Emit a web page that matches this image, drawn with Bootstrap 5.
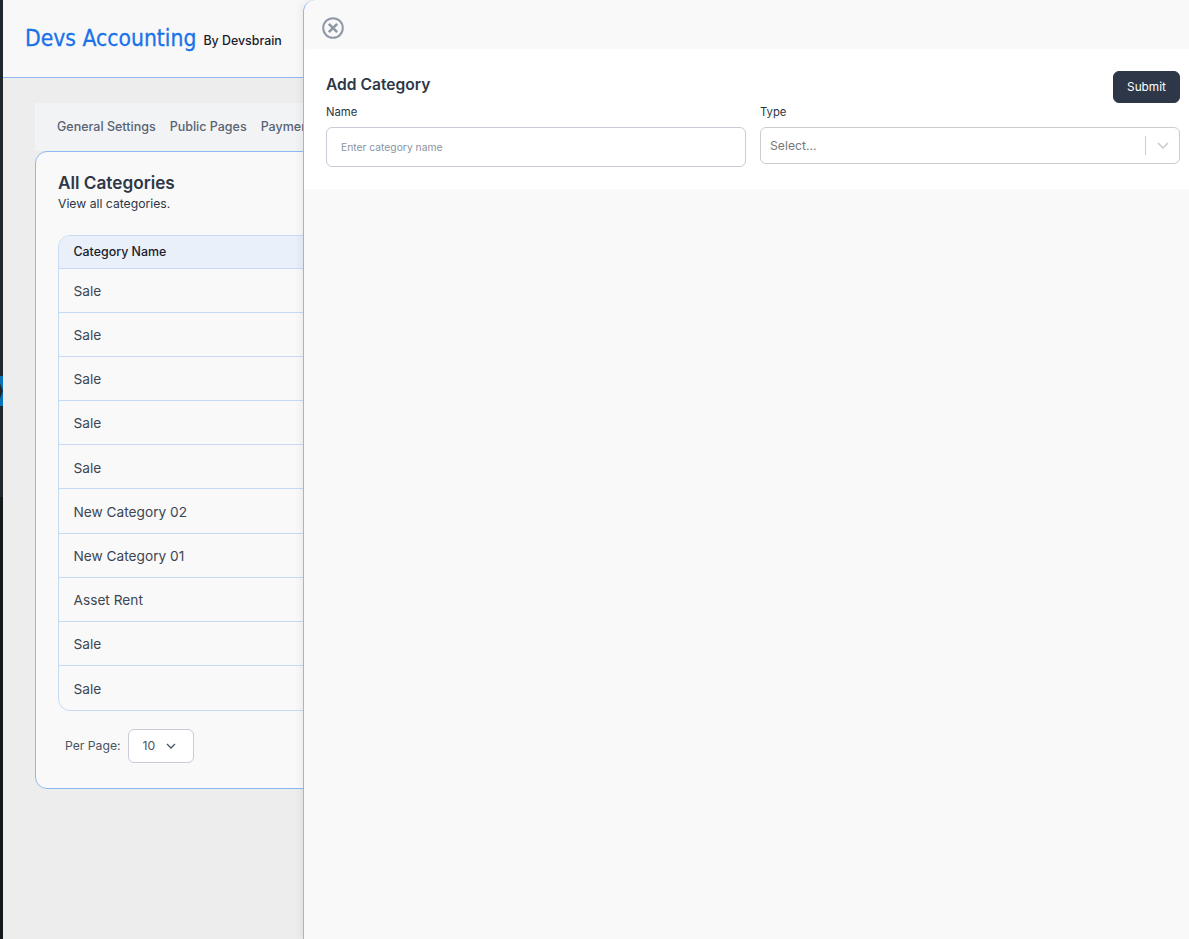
<!DOCTYPE html>
<html lang="en">

<head>
    <meta charset="UTF-8">
    <title>Devs Accounting</title>
    <link rel="stylesheet" href="https://cdn.jsdelivr.net/npm/bootstrap@5.3.0/dist/css/bootstrap.min.css">
    <style>
        body {
            font-family: Inter, "Liberation Sans", sans-serif;
            background: #ededed;
            color: #2d3748;
            height: 939px;
            overflow: hidden;
        }

        .side-strip {
            width: 3px;
            flex: none;
            background: linear-gradient(#1f292d 497px, #14191c 497px);
            padding-top: 376px;
        }

        .side-mark {
            height: 30px;
            background: #0b72b9;
            clip-path: polygon(0 0, 100% 0, 100% 100%, 0 100%, 0 75%, 100% 50%, 0 25%);
        }

        .top-head {
            height: 78px;
            background: #f8f8f8;
            border-bottom: 1px solid #8fb8f0;
            padding: 0 22px;
        }

        .logo-name {
            font-family: "DejaVu Sans", sans-serif;
            font-stretch: condensed;
            font-size: 22.7px;
            line-height: 1;
            color: #1a73e8;
            -webkit-text-stroke: .3px #1a73e8;
        }

        .logo-by {
            font-size: 12.4px;
            font-weight: 500;
            color: #1a202c;
            margin: 5px 0 0 7px;
        }

        .page-wrap {
            padding: 25px 0 0 32px;
        }

        .tab-bar {
            height: 48px;
            background: #f2f3f5;
            padding: 0 22px;
            gap: 14px;
            font-size: 12.5px;
            font-weight: 500;
            color: #596373;
        }

        .tab-bar .nav-link {
            padding: 0;
            color: #596373;
        }

        .cat-card {
            height: 638px;
            background: #f9f9f9;
            border: 1px solid #8fb8f0;
            border-radius: 12px;
            padding: 20px 22px;
        }

        .cat-title {
            font-size: 17.2px;
            font-weight: 600;
            line-height: 22px;
            margin: 0;
        }

        .cat-sub {
            font-size: 12.2px;
            line-height: 18px;
            margin: 1px 0 22px;
        }

        .table-wrap {
            border: 1px solid #c5daf5;
            border-radius: 12px;
            overflow: hidden;
        }

        .cat-table {
            --bs-table-bg: transparent;
            --bs-table-color: #3c4654;
            margin: 0;
            border-color: #c5daf5;
            font-size: 13.7px;
        }

        .cat-table th {
            height: 32px;
            padding: 2px 14.5px 0;
            vertical-align: middle;
            background: #e9f0f9;
            color: #1a202c;
            font-size: 12.4px;
            font-weight: 500;
        }

        .cat-table td {
            height: 44.2px;
            padding: 2px 14.5px 0;
            vertical-align: middle;
        }

        .cat-table tr:last-child td {
            border-bottom: 0;
        }

        .pager-row {
            margin-top: 18px;
            padding-left: 7px;
            gap: 7px;
            font-size: 12.2px;
            color: #4a5463;
        }

        .per-box {
            width: 66px;
            height: 34px;
            background: #fff;
            border: 1px solid #c8ccd6;
            border-radius: 6px;
            padding: 0 17px 0 14px;
        }

        .slide-panel {
            --bs-offcanvas-width: 886px;
            --bs-offcanvas-bg: #f9f9f9;
            --bs-offcanvas-color: #2d3748;
            --bs-offcanvas-border-width: 0;
            border-left: 1px solid #8fb8f0 !important;
            border-top-left-radius: 12px;
            box-shadow: -3px 0 8px rgba(0, 0, 0, .05);
        }

        .panel-top {
            height: 49px;
            padding: 6px 0 0 18px;
        }

        .close-btn {
            width: 22px;
            height: 22px;
            padding: 0;
            border: 0;
            background: none;
            line-height: 0;
        }

        .form-sheet {
            height: 140px;
            background: #fff;
            border-top-left-radius: 4px;
            padding: 22px 9px 0 22px;
        }

        .sheet-title {
            font-size: 15.6px;
            font-weight: 600;
            line-height: 28px;
            margin: 0;
            color: #2d3748;
        }

        .submit-btn {
            --bs-btn-bg: #2d3748;
            --bs-btn-color: #fff;
            --bs-btn-border-color: #2d3748;
            width: 67px;
            height: 32px;
            padding: 2px 0 0;
            font-size: 11.8px;
            font-weight: 400;
            border-radius: 6px;
        }

        .form-rows {
            gap: 14px;
            margin-top: 2px;
        }

        .form-rows > div {
            flex: 1 1 0;
        }

        .field-label {
            font-size: 11.3px;
            line-height: 14px;
            margin: 0 0 8px;
            color: #2d3748;
            font-weight: 400;
        }

        .name-input {
            height: 40px;
            font-size: 10.3px;
            padding: 0 14px;
            border-color: #c8ccd6;
            border-radius: 6px;
        }

        .name-input::placeholder {
            color: #8a94a3;
        }

        .type-select {
            height: 37px;
            background: #fff;
            border: 1px solid #ccc;
            border-radius: 6px;
            padding: 0 0 0 9px;
            font-size: 12.2px;
            color: #777;
        }

        .select-text {
            padding-top: 2px;
        }

        .select-sep {
            width: 1px;
            height: 19px;
            background: #ccc;
        }

        .select-arrow {
            width: 33px;
        }
    </style>
</head>

<body class="d-flex">
    <div class="side-strip">
        <div class="side-mark"></div>
    </div>

    <div class="flex-grow-1">
        <header class="top-head d-flex align-items-center">
            <span class="logo-name">Devs Accounting</span>
            <span class="logo-by">By Devsbrain</span>
        </header>

        <div class="page-wrap">
            <nav class="nav tab-bar align-items-center flex-nowrap text-nowrap">
                <a class="nav-link" href="#">General Settings</a>
                <a class="nav-link" href="#">Public Pages</a>
                <a class="nav-link" href="#">Payment Settings</a>
            </nav>

            <div class="cat-card">
                <h2 class="cat-title">All Categories</h2>
                <p class="cat-sub">View all categories.</p>

                <div class="table-wrap">
                    <table class="table cat-table">
                        <thead>
                            <tr><th>Category Name</th></tr>
                        </thead>
                        <tbody>
                            <tr><td>Sale</td></tr>
                            <tr><td>Sale</td></tr>
                            <tr><td>Sale</td></tr>
                            <tr><td>Sale</td></tr>
                            <tr><td>Sale</td></tr>
                            <tr><td>New Category 02</td></tr>
                            <tr><td>New Category 01</td></tr>
                            <tr><td>Asset Rent</td></tr>
                            <tr><td>Sale</td></tr>
                            <tr><td>Sale</td></tr>
                        </tbody>
                    </table>
                </div>

                <div class="pager-row d-flex align-items-center">
                    <span>Per Page:</span>
                    <div class="per-box d-flex align-items-center justify-content-between">
                        <span>10</span>
                        <svg width="10" height="6" viewBox="0 0 10 6" fill="none" stroke="#4a5463" stroke-width="1.3">
                            <path d="M1 1l4 4 4-4" />
                        </svg>
                    </div>
                </div>
            </div>
        </div>
    </div>

    <aside class="offcanvas offcanvas-end show slide-panel">
        <div class="panel-top d-flex align-items-center">
            <button class="close-btn" type="button" aria-label="Close">
                <svg width="22" height="22" viewBox="0 0 22 22" fill="none" stroke="#8f98a6" stroke-width="2">
                    <circle cx="11" cy="11" r="9.8" />
                    <path d="M6.8 6.8l8.4 8.4M15.2 6.8l-8.4 8.4" stroke-width="2.6" />
                </svg>
            </button>
        </div>

        <form class="form-sheet">
            <div class="d-flex justify-content-between align-items-start">
                <h3 class="sheet-title">Add Category</h3>
                <button class="btn submit-btn" type="button">Submit</button>
            </div>
            <div class="d-flex form-rows">
                <div>
                    <label class="form-label field-label d-block">Name</label>
                    <input class="form-control name-input" type="text" placeholder="Enter category name">
                </div>
                <div>
                    <label class="form-label field-label d-block">Type</label>
                    <div class="type-select d-flex align-items-center">
                        <span class="flex-grow-1 select-text">Select...</span>
                        <span class="select-sep"></span>
                        <span class="select-arrow d-flex justify-content-center">
                            <svg width="12" height="7" viewBox="0 0 12 7" fill="none" stroke="#ccc" stroke-width="1.6">
                                <path d="M1 1l5 5 5-5" />
                            </svg>
                        </span>
                    </div>
                </div>
            </div>
        </form>
    </aside>
</body>

</html>
